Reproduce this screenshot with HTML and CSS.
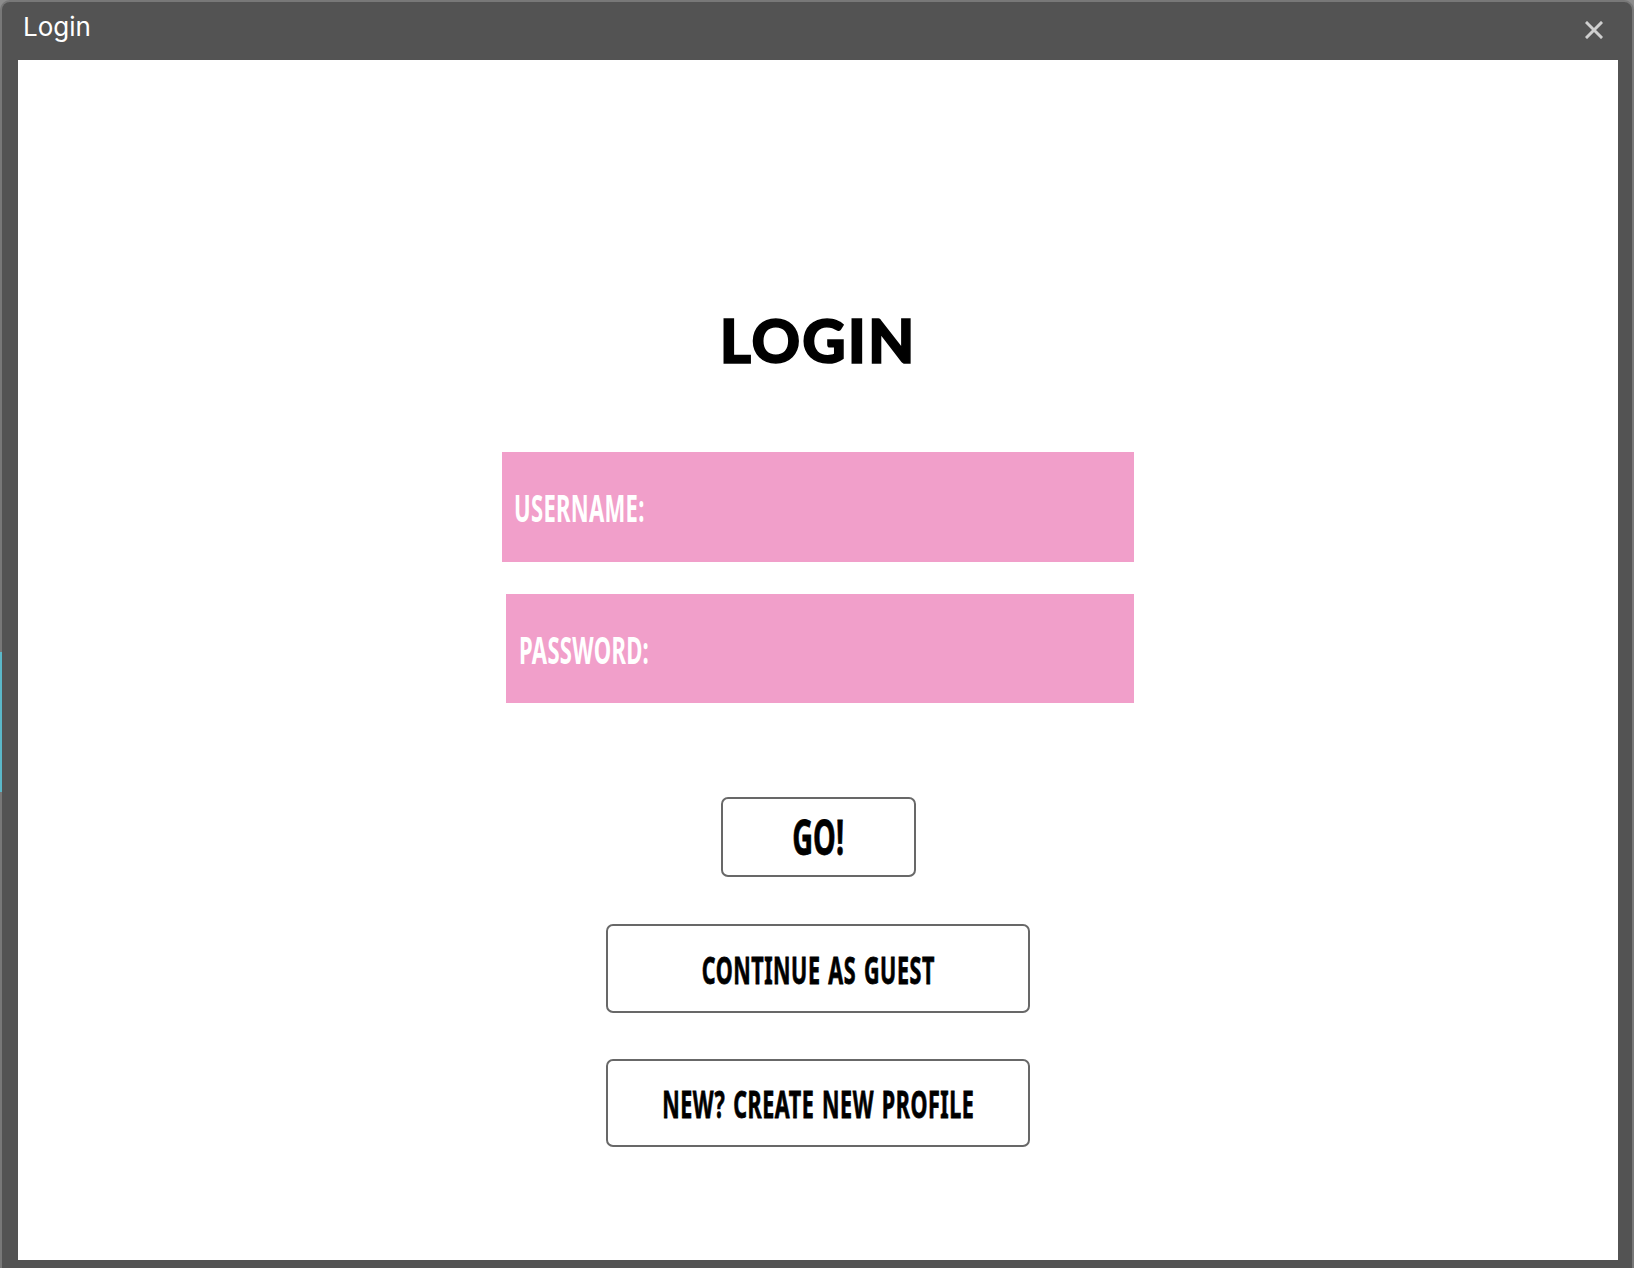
FILE: index.html
```html
<!DOCTYPE html>
<html lang="en">
<head>
<meta charset="utf-8">
<title>Login</title>
<link rel="stylesheet" href="styles.css">
</head>
<body>
<div class="desk-strip"></div>
<div class="window">
  <div class="titlebar">
    <span class="title">Login</span>
    <button class="close" aria-label="Close">
      <svg width="18" height="18" viewBox="0 0 18 18"><path d="M2 2 L16 16 M16 2 L2 16" stroke="#cfcfcf" stroke-width="3" stroke-linecap="square" fill="none"/></svg>
    </button>
  </div>
  <main class="content">
    <h1 class="heading">LOGIN</h1>
    <div class="fields">
      <div class="field field-user"><span class="label">USERNAME:</span></div>
      <div class="field field-pass"><span class="label">PASSWORD:</span></div>
    </div>
    <button class="btn btn-go"><span class="btn-text btn-text-go">GO!</span></button>
    <button class="btn btn-wide btn-guest"><span class="btn-text">CONTINUE AS GUEST</span></button>
    <button class="btn btn-wide btn-new"><span class="btn-text">NEW? CREATE NEW PROFILE</span></button>
  </main>
</div>
</body>
</html>
```
FILE: styles.css
```css
html, body {
  margin: 0;
  padding: 0;
  height: 100%;
}
body {
  background: #8c8c8c;
  overflow: hidden;
  position: relative;
}
.desk-strip {
  position: absolute;
  left: 0;
  top: 652px;
  width: 2px;
  height: 140px;
  background: #5bb8c9;
}
.window {
  box-sizing: border-box;
  width: 1634px;
  height: 1268px;
  background: #535353;
  border: 2px solid #787878;
  border-bottom: none;
  border-radius: 10px 10px 0 0;
  padding: 0 14px 8px 16px;
  display: flex;
  flex-direction: column;
}
.titlebar {
  height: 58px;
  display: flex;
  align-items: flex-start;
  justify-content: space-between;
  padding: 0 15px 0 5px;
}
.title {
  margin-top: 10px;
  font-family: Inter, "Noto Sans", sans-serif;
  font-size: 26px;
  line-height: 30px;
  color: #ffffff;
}
.close {
  margin-top: 19px;
  padding: 0;
  border: none;
  background: none;
  width: 18px;
  height: 18px;
  display: block;
}
.close svg { display: block; }
.content {
  flex: 1;
  background: #ffffff;
  display: flex;
  flex-direction: column;
  align-items: center;
}
.heading {
  margin: 250px 0 0 0;
  font-family: Lato, "Noto Sans", sans-serif;
  font-weight: 900;
  font-size: 60px;
  line-height: 60px;
  color: #000;
  letter-spacing: 2px;
  -webkit-text-stroke: 1.6px #000;
}
.fields {
  margin-top: 82px;
  width: 632px;
  display: flex;
  flex-direction: column;
}
.field {
  background: #f19fca;
  display: flex;
  align-items: center;
}
.field-user {
  height: 110px;
  padding-left: 12px;
}
.field-pass {
  margin-top: 32px;
  margin-left: 4px;
  height: 109px;
  padding-left: 13px;
}
.label {
  display: inline-block;
  white-space: nowrap;
  font-family: "Noto Sans", sans-serif;
  font-weight: 700;
  font-size: 38px;
  line-height: 40px;
  letter-spacing: 0.5px;
  color: #ffffff;
  transform: scaleX(0.58);
  transform-origin: left center;
}
.btn {
  box-sizing: border-box;
  background: #ffffff;
  border: 2px solid #686868;
  border-radius: 7px;
  padding: 0;
  display: flex;
  align-items: center;
  justify-content: center;
  cursor: pointer;
}
.btn-go {
  margin-top: 94px;
  width: 195px;
  height: 80px;
}
.btn-wide {
  width: 424px;
}
.btn-guest {
  margin-top: 47px;
  height: 89px;
}
.btn-new {
  margin-top: 46px;
  height: 88px;
}
.btn-text {
  display: inline-block;
  white-space: nowrap;
  font-family: "Noto Sans", sans-serif;
  font-weight: 700;
  font-size: 38px;
  line-height: 40px;
  letter-spacing: 1px;
  word-spacing: 3px;
  color: #000;
  transform: scaleX(0.565);
  transform-origin: center center;
  -webkit-text-stroke: 0.8px #000;
}
.btn-text-go {
  font-size: 48px;
  line-height: 50px;
  letter-spacing: 0;
  transform: scaleX(0.6);
}
```
